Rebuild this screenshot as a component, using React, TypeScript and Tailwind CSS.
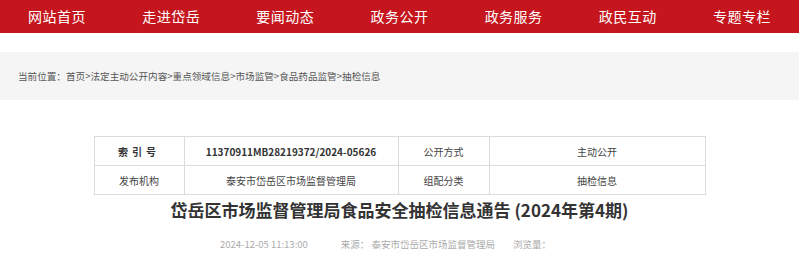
const navItems = ['网站首页', '走进岱岳', '要闻动态', '政务公开', '政务服务', '政民互动', '专题专栏']

const crumbs = ['首页', '法定主动公开内容', '重点领域信息', '市场监管', '食品药品监管', '抽检信息']

const font = { fontFamily: '"Microsoft YaHei", "Noto Sans CJK SC", "Noto Sans", sans-serif' }

function Cell({ children, bold, last }: { children: React.ReactNode; bold?: boolean; last?: boolean }) {
  return (
    <div
      className={`flex items-center justify-center h-[28px] border-[#dcdcdc] ${last ? '' : 'border-r'} text-[10px] ${bold ? 'font-bold text-[#333]' : 'text-[#444]'}`}
    >
      {children}
    </div>
  )
}

export default function App() {
  return (
    <div className="w-[799px] h-[254px] bg-white overflow-hidden" style={font}>
      <nav className="h-[33px] bg-[#c5161d] flex">
        {navItems.map((item) => (
          <a key={item} href="#" className="flex-1 flex items-center justify-center text-white text-[14px] tracking-[0.5px]">
            {item}
          </a>
        ))}
      </nav>

      <div className="mt-[19px] h-[48px] bg-[#f5f5f5] flex items-center px-[18px] text-[9.6px] text-[#555]">
        <span>当前位置：</span>
        {crumbs.map((c, i) => (
          <span key={c}>
            {i > 0 && <span>&gt;</span>}
            {c}
          </span>
        ))}
      </div>

      <div className="mt-[36px] mx-auto w-[612px] border border-[#dcdcdc]">
        <div className="grid grid-cols-[90px_214px_91px_215px] border-b border-[#dcdcdc]">
          <Cell bold><span className="tracking-[4px]">索引号</span></Cell>
          <Cell bold>11370911MB28219372/2024-05626</Cell>
          <Cell>公开方式</Cell>
          <Cell last>主动公开</Cell>
        </div>
        <div className="grid grid-cols-[90px_214px_91px_215px]">
          <Cell>发布机构</Cell>
          <Cell>泰安市岱岳区市场监督管理局</Cell>
          <Cell>组配分类</Cell>
          <Cell last>抽检信息</Cell>
        </div>
      </div>

      <h1 className="mt-[3px] text-center text-[17px] leading-[24px] font-bold text-[#333]">
        岱岳区市场监督管理局食品安全抽检信息通告 (2024年第4期)
      </h1>

      <div className="mt-[15px] flex justify-center pr-[28px] text-[9.5px] text-[#aaa]">
        <span>2024-12-05 11:13:00</span>
        <span className="ml-[33px]">来源：&nbsp;泰安市岱岳区市场监督管理局</span>
        <span className="ml-[18px]">浏览量：</span>
      </div>
    </div>
  )
}
